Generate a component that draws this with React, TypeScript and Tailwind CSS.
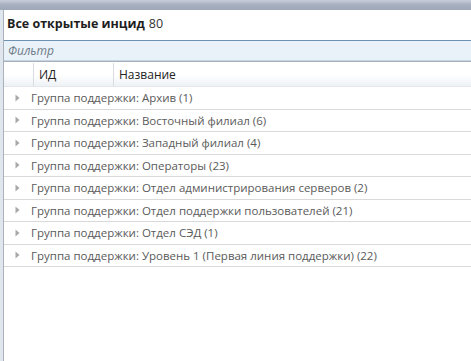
import React from "react";

const rows = [
  "Группа поддержки: Архив (1)",
  "Группа поддержки: Восточный филиал (6)",
  "Группа поддержки: Западный филиал (4)",
  "Группа поддержки: Операторы (23)",
  "Группа поддержки: Отдел администрирования серверов (2)",
  "Группа поддержки: Отдел поддержки пользователей (21)",
  "Группа поддержки: Отдел СЭД (1)",
  "Группа поддержки: Уровень 1 (Первая линия поддержки) (22)",
];

function Arrow() {
  return (
    <svg width="5" height="8" viewBox="0 0 5 8" className="block">
      <path d="M0.5 0.5 L4.5 4 L0.5 7.5 Z" fill="#a8a8a8" />
    </svg>
  );
}

export default function App() {
  return (
    <div
      className="w-[471px] h-[361px] bg-white overflow-hidden flex flex-col"
      style={{ fontFamily: '"Open Sans", "Noto Sans", sans-serif' }}
    >
      <div className="h-[10px] shrink-0 bg-gradient-to-b from-[#c9ceda] via-[#a6afbf] to-[#9ea8b8]" />
      <div className="flex flex-1 min-h-0">
        <div className="w-[4px] shrink-0 bg-[#dfe6ee] border-r border-[#aab3bd]" />
        <div className="flex-1 flex flex-col min-w-0">
          <div className="h-[30px] shrink-0 flex items-center pl-[3px] pb-[2px] text-[12.5px] text-[#1e1e1e] leading-none">
            <span className="font-bold">Все открытые инцид</span>
            <span className="ml-[4px] text-[#333]">80</span>
          </div>
          <div className="h-[21px] shrink-0 border-t border-[#6d92b3] bg-[#e9f2f9] border-b border-b-[#c3d4e3] flex items-center pl-[4px] text-[12px] italic text-[#6f7b88] leading-none">
            Фильтр
          </div>
          <div className="h-[2px] shrink-0 border-t border-[#a9b0b7] bg-white" />
          <div className="h-[24px] shrink-0 flex bg-gradient-to-b from-white via-white to-[#eef2f5] border-b border-[#e3e7eb] text-[12px] text-[#222] leading-none">
            <div className="w-[30px] border-r border-[#d7dce1]" />
            <div className="w-[80px] border-r border-[#d7dce1] flex items-center pl-[5px]">ИД</div>
            <div className="flex-1 flex items-center pl-[5px]">Название</div>
          </div>
          {rows.map((r) => (
            <div
              key={r}
              className="h-[22.5px] shrink-0 flex items-center border-b border-[#d9d9d9] text-[11.5px] text-[#5a5a5a] leading-none whitespace-nowrap"
            >
              <div className="w-[27px] pl-[11px] flex items-center">
                <Arrow />
              </div>
              <span>{r}</span>
            </div>
          ))}
        </div>
      </div>
    </div>
  );
}
